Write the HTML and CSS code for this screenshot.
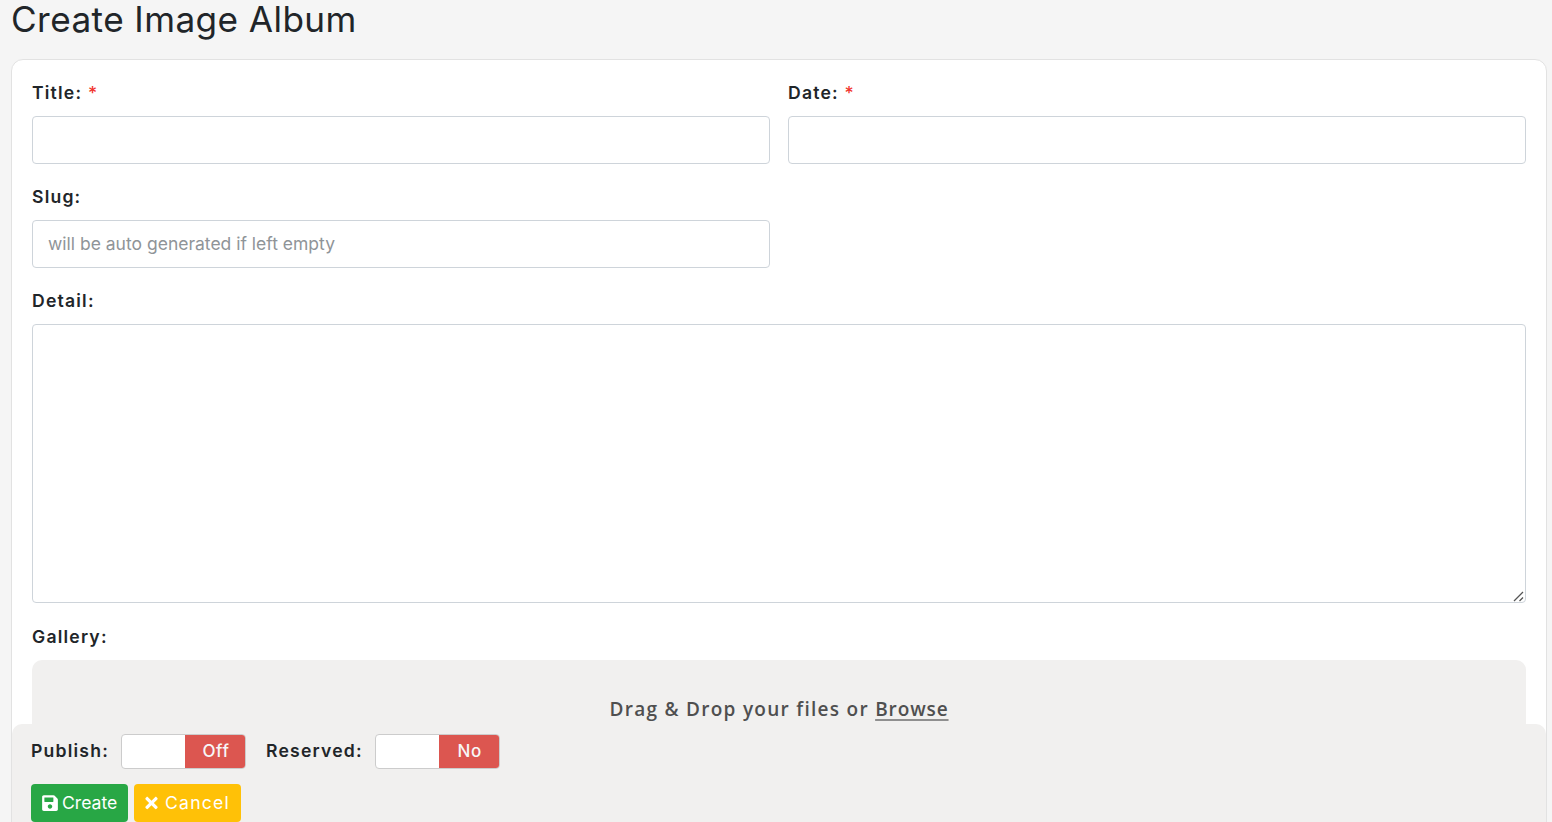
FILE: index.html
```
<!DOCTYPE html>
<html lang="en">
<head>
<meta charset="utf-8">
<title>Create Image Album</title>
<link rel="stylesheet" href="styles.css">
</head>
<body>
<main class="page">
  <h1 class="page-title">Create Image Album</h1>
  <form class="card">
    <div class="row">
      <div class="field">
        <label class="label">Title: <span class="req">*</span></label>
        <input class="input" type="text">
      </div>
      <div class="field">
        <label class="label">Date: <span class="req">*</span></label>
        <input class="input" type="text">
      </div>
    </div>
    <div class="row">
      <div class="field">
        <label class="label">Slug:</label>
        <input class="input" type="text" placeholder="will be auto generated if left empty">
      </div>
      <div class="field"></div>
    </div>
    <div class="field">
      <label class="label">Detail:</label>
      <div class="textarea-wrap">
        <textarea class="textarea"></textarea>
        <svg class="grip" viewBox="0 0 11 11"><path d="M1 10L10 1M6.500 10L10 6.500" stroke="#555" stroke-width="1.300" fill="none"/></svg>
      </div>
    </div>
    <div class="field">
      <label class="label">Gallery:</label>
      <div class="dropzone">Drag &amp; Drop your files or <span class="browse">Browse</span></div>
    </div>
  </form>
  <div class="actions">
    <div class="toggles">
      <span class="toggle-label">Publish:</span>
      <div class="toggle"><span class="toggle-blank"></span><span class="toggle-state">Off</span></div>
      <span class="toggle-label toggle-label-next">Reserved:</span>
      <div class="toggle"><span class="toggle-blank"></span><span class="toggle-state">No</span></div>
    </div>
    <div class="buttons">
      <button class="btn btn-create" type="button">
        <svg class="icon" viewBox="0 0 448 512"><path fill="currentColor" d="M433.900 129.900l-83.900-83.900A48 48 0 0 0 316.100 32H48C21.500 32 0 53.500 0 80v352c0 26.500 21.500 48 48 48h352c26.500 0 48-21.500 48-48V163.900a48 48 0 0 0-14.100-34zM224 416c-35.300 0-64-28.700-64-64 0-35.300 28.700-64 64-64s64 28.700 64 64c0 35.300-28.700 64-64 64zm96-304.500V212c0 6.600-5.400 12-12 12H76c-6.600 0-12-5.400-12-12V108c0-6.600 5.400-12 12-12h228.500c3.200 0 6.200 1.300 8.500 3.500l3.500 3.500c2.200 2.200 3.500 5.300 3.500 8.500z"/></svg>Create
      </button>
      <button class="btn btn-cancel" type="button">
        <svg class="icon icon-x" viewBox="0 0 352 512"><path fill="currentColor" d="M242.720 256l100.070-100.070c12.280-12.280 12.280-32.190 0-44.480l-22.240-22.240c-12.280-12.280-32.190-12.280-44.480 0L176 189.280 75.930 89.210c-12.280-12.280-32.190-12.280-44.480 0L9.210 111.450c-12.280 12.280-12.280 32.190 0 44.480L109.280 256 9.210 356.070c-12.280 12.280-12.280 32.190 0 44.480l22.240 22.240c12.280 12.280 32.200 12.280 44.480 0L176 322.720l100.070 100.070c12.280 12.280 32.200 12.280 44.480 0l22.240-22.240c12.280-12.280 12.280-32.190 0-44.480L242.720 256z"/></svg>Cancel
      </button>
    </div>
  </div>
</main>
</body>
</html>
```
FILE: styles.css
```
* { box-sizing: border-box; }
html, body { margin: 0; height: 100%; overflow: hidden; }
body {
  background: #f5f5f5;
  color: #212529;
  font-family: Inter, "Liberation Sans", sans-serif;
}
.page { position: relative; height: 822px; padding: 0 5px 0 11px; overflow: hidden; }
.page-title {
  margin: 0;
  height: 59px;
  font-size: 35.2px;
  font-weight: 400;
  line-height: 38px;
  letter-spacing: 0.4px;
}
.card {
  display: flex;
  flex-direction: column;
  gap: 20px;
  height: 900px;
  background: #fff;
  border: 1px solid #e2e2e2;
  border-radius: 12px;
  padding: 20px;
}
.row { display: flex; gap: 18px; }
.row .field { flex: 1 1 0; }
.field { display: flex; flex-direction: column; }
.label {
  height: 24px;
  margin-bottom: 12px;
  font-size: 17.6px;
  font-weight: 600;
  line-height: 25px;
  letter-spacing: 1.2px;
}
.req { color: #f1352d; font-weight: 500; }
.input, .textarea {
  display: block;
  width: 100%;
  border: 1px solid #ced4da;
  border-radius: 4px;
  background: #fff;
  padding: 0 15px 1px;
  font-family: Inter, "Liberation Sans", sans-serif;
  font-size: 17.5px;
  outline: none;
}
.input { height: 48px; }
.input::placeholder { color: #8f9498; opacity: 1; }
.textarea-wrap { position: relative; margin-bottom: 1px; }
.textarea { height: 279px; resize: none; }
.grip { position: absolute; right: 2px; bottom: 1px; width: 11px; height: 11px; pointer-events: none; }
.dropzone {
  height: 200px;
  padding-top: 35px;
  background: #f1f0ef;
  border-radius: 10px;
  color: #4f4f4f;
  font-family: "Open Sans", "Noto Sans", sans-serif;
  font-size: 19px;
  font-weight: 550;
  line-height: 28px;
  letter-spacing: 1.28px;
  text-align: center;
}
.browse {
  letter-spacing: 0.9px;
  text-decoration: underline;
  text-decoration-color: #8f8f8f;
  text-decoration-thickness: 2px;
  text-underline-offset: 3px;
}
.actions {
  position: absolute;
  left: 12px;
  right: 6px;
  top: 724px;
  height: 98px;
  padding: 10px 19px 0;
  background: #f1f0ef;
  border-radius: 10px 10px 0 0;
}
.toggles { display: flex; align-items: center; height: 35px; }
.toggle-label {
  font-size: 17.6px;
  font-weight: 600;
  line-height: 33px;
  padding-bottom: 3px;
  letter-spacing: 1.2px;
  margin-right: 12px;
}
.toggle-label-next { margin-left: 20px; }
.toggle {
  display: flex;
  flex: none;
  width: 125px;
  height: 35px;
  border: 1px solid #ccc;
  border-radius: 4px;
  overflow: hidden;
  background: #fff;
}
.toggle-blank { width: 63px; }
.toggle-state {
  flex: 1;
  padding-left: 2px;
  background: #dc5650;
  color: #f7f7f7;
  font-size: 17px;
  font-weight: 500;
  line-height: 33px;
  letter-spacing: 0.6px;
  text-align: center;
}
.buttons { display: flex; gap: 6px; margin-top: 15px; }
.btn {
  display: flex;
  align-items: center;
  height: 38px;
  border: 0;
  border-radius: 4px;
  padding: 0 11px 1px;
  color: #fff;
  font-family: Inter, "Liberation Sans", sans-serif;
  font-size: 17.6px;
  font-weight: 400;
}
.btn-create { width: 97px; background: #28a745; }
.btn-cancel { width: 107px; background: #ffc107; letter-spacing: 1.2px; padding: 0 10px 1px; }
.icon { width: 16px; height: 18px; margin-right: 4px; flex: none; }
.icon-x { width: 17px; margin: 0 5px 0 -1px; }
```
